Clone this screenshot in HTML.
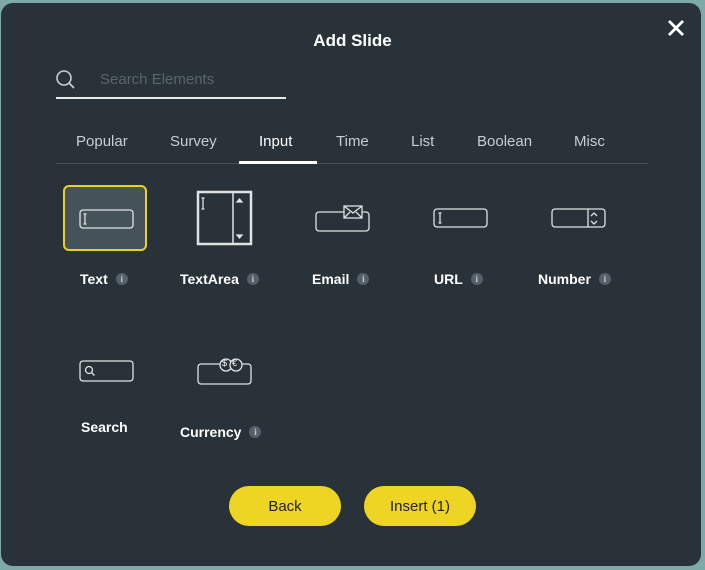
<!DOCTYPE html>
<html><head><style>
body{margin:0;width:705px;height:570px;background:#7fa9a8;overflow:hidden;font-family:"Liberation Sans",sans-serif;}
.p{position:absolute;left:1px;top:3px;width:700px;height:563px;background:#283238;border-radius:12px;}
.a{position:absolute;}
.t{color:#fff;font-weight:bold;font-size:14px;}
.tab{position:absolute;top:133px;color:#c8cdd0;font-size:15px;}
.i{display:inline-block;width:12px;height:12px;border-radius:50%;background:#56606a;color:#c8cdd0;font-size:9px;text-align:center;line-height:12px;vertical-align:2px;margin-left:8px;font-family:"Liberation Serif",serif;font-weight:bold}
.btn{position:absolute;top:486px;width:112px;height:40px;border-radius:20px;background:#eed523;color:#222;font-size:15px;text-align:center;line-height:42px;}
</style></head><body>
<div class="p"></div>
<div class="a t" style="left:0;width:705px;text-align:center;top:31px;font-size:17px">Add Slide</div>
<svg class="a" style="left:666px;top:18px" width="20" height="20"><path d="M3 3L17 17M17 3L3 17" stroke="#fff" stroke-width="2.8"/></svg>
<svg class="a" style="left:55px;top:69px" width="22" height="22"><circle cx="9" cy="9" r="7" stroke="#c8cdd0" stroke-width="1.6" fill="none"/><path d="M14 14L19 19" stroke="#c8cdd0" stroke-width="1.8"/></svg>
<div class="a" style="left:100px;top:71px;color:#5a646c;font-size:15px">Search Elements</div>
<div class="a" style="left:56px;top:97px;width:230px;height:2px;background:#e8eaeb"></div>
<div class="tab" style="left:76px">Popular</div>
<div class="tab" style="left:170px">Survey</div>
<div class="tab" style="left:259px;color:#fff">Input</div>
<div class="tab" style="left:336px">Time</div>
<div class="tab" style="left:411px">List</div>
<div class="tab" style="left:477px">Boolean</div>
<div class="tab" style="left:574px">Misc</div>
<div class="a" style="left:56px;top:163px;width:592px;height:1px;background:#444e55"></div>
<div class="a" style="left:239px;top:161px;width:78px;height:3px;background:#fff"></div>
<div class="a" style="left:63px;top:185px;width:84px;height:66px;border:2px solid #e8d21c;border-radius:6px;background:#46525a;box-sizing:border-box"></div>
<svg class="a" style="left:0;top:0" width="705" height="570" fill="none" stroke="#e0e2e3" stroke-width="1.3">
<rect x="80" y="210" width="53" height="18" rx="3"/><path d="M85 214v10M83.5 214h3M83.5 224h3"/>
<rect x="198" y="192" width="53" height="52" stroke-width="2.5"/><path d="M233 192v52" stroke-width="1.5"/><path d="M203 198v11M201.5 198h3M201.5 209h3"/>
<path d="M237 202h5l-2.5-3z M237 235h5l-2.5 3z" fill="#e0e2e3"/>
<rect x="316" y="212" width="53" height="19" rx="3"/><rect x="344" y="206" width="18" height="12" fill="#283238"/><path d="M344 206l9 7 9-7M344 218l6-6M362 218l-6-6"/>
<rect x="434" y="209" width="53" height="18" rx="3"/><path d="M440 213v10M438.5 213h3M438.5 223h3"/>
<rect x="552" y="209" width="53" height="18" rx="3"/><path d="M588 209v18M591 216l3-3 3 3M591 221l3 3 3-3"/>
<rect x="80" y="361" width="53" height="20" rx="3"/><circle cx="89" cy="370" r="3.5"/><path d="M91.5 372.5l3 3"/>
<rect x="198" y="364" width="53" height="20" rx="3"/><circle cx="226" cy="365" r="6" fill="#283238"/><circle cx="236" cy="365" r="6" fill="#283238"/>
</svg>
<div class="a" style="left:222px;top:358px;color:#fff;font-size:9px">$</div>
<div class="a" style="left:232px;top:358px;color:#fff;font-size:9px">€</div>
<div class="a t" style="left:80px;top:271px">Text<span class="i">i</span></div>
<div class="a t" style="left:180px;top:271px">TextArea<span class="i">i</span></div>
<div class="a t" style="left:312px;top:271px">Email<span class="i">i</span></div>
<div class="a t" style="left:434px;top:271px">URL<span class="i">i</span></div>
<div class="a t" style="left:538px;top:271px">Number<span class="i">i</span></div>
<div class="a t" style="left:81px;top:419px">Search</div>
<div class="a t" style="left:180px;top:424px">Currency<span class="i">i</span></div>
<div class="btn" style="left:229px">Back</div>
<div class="btn" style="left:364px">Insert (1)</div>
</body></html>
